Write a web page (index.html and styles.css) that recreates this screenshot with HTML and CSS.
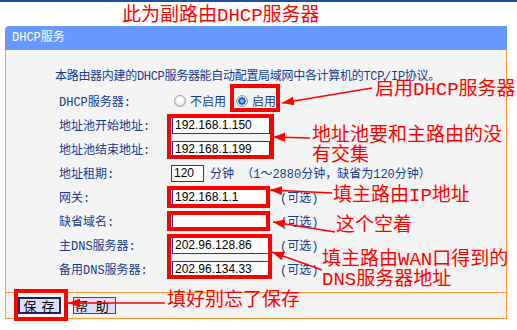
FILE: index.html
```html
<!DOCTYPE html>
<html lang="zh-CN">
<head>
<meta charset="utf-8">
<title>DHCP服务</title>
<link rel="stylesheet" href="styles.css">
</head>
<body>
<div class="topline"></div>
<h1 class="title">此为副路由DHCP服务器</h1>
<div class="panel">
  <div class="panel-head">DHCP服务</div>
  <div class="panel-body">
    <p class="intro">本路由器内建的DHCP服务器能自动配置局域网中各计算机的TCP/IP协议。</p>
    <div class="form">
      <div class="label">DHCP服务器:</div>
      <div class="field">
        <span class="radio"></span><span class="rlabel">不启用</span>
        <span class="radio on"></span><span class="rlabel">启用</span>
      </div>
      <div class="label">地址池开始地址:</div>
      <div class="field"><span class="input">192.168.1.150</span></div>
      <div class="label">地址池结束地址:</div>
      <div class="field"><span class="input">192.168.1.199</span></div>
      <div class="label">地址租期:</div>
      <div class="field"><span class="input short">120</span><span class="unit">分钟 （1～2880分钟，缺省为120分钟）</span></div>
      <div class="label">网关:</div>
      <div class="field"><span class="input">192.168.1.1</span><span class="opt">(可选)</span></div>
      <div class="label">缺省域名:</div>
      <div class="field"><span class="input"></span><span class="opt">(可选)</span></div>
      <div class="label">主DNS服务器:</div>
      <div class="field"><span class="input">202.96.128.86</span><span class="opt">(可选)</span></div>
      <div class="label">备用DNS服务器:</div>
      <div class="field"><span class="input">202.96.134.33</span><span class="opt">(可选)</span></div>
    </div>
  </div>
  <div class="panel-foot">
    <span class="btn btn-save">保 存</span>
    <span class="btn btn-help">帮 助</span>
  </div>
</div>

<div class="notes">
  <svg class="marks" width="517" height="330" viewBox="0 0 517 330">
    <defs>
      <marker id="head" markerUnits="userSpaceOnUse" markerWidth="13" markerHeight="9" refX="12" refY="4.5" orient="auto">
        <path d="M0,0 L12,4.5 L0,9 Z" fill="#ff0000"/>
      </marker>
    </defs>
    <g fill="none" stroke="#ff0000" stroke-width="4">
      <rect x="232" y="86" width="46" height="24"/>
      <rect x="169" y="116" width="103" height="41"/>
      <rect x="169" y="188" width="99" height="18"/>
      <rect x="169" y="213" width="99" height="16"/>
      <rect x="169" y="236" width="101" height="41"/>
      <rect x="16" y="291" width="50" height="28"/>
    </g>
    <g stroke="#ff0000" stroke-width="1.5" marker-end="url(#head)">
      <line x1="372" y1="88" x2="282" y2="103"/>
      <line x1="310" y1="138" x2="273" y2="137"/>
      <line x1="332" y1="193" x2="270" y2="190"/>
      <line x1="335" y1="232" x2="273" y2="222"/>
      <line x1="322" y1="270" x2="272" y2="252"/>
      <line x1="165" y1="303" x2="68" y2="303"/>
    </g>
  </svg>
  <span class="note n1">启用DHCP服务器</span>
  <span class="note n2">地址池要和主路由的没<br>有交集</span>
  <span class="note n3">填主路由IP地址</span>
  <span class="note n4">这个空着</span>
  <span class="note n5">填主路由WAN口得到的<br>DNS服务器地址</span>
  <span class="note n6">填好别忘了保存</span>
</div>
</body>
</html>
```

FILE: styles.css
```css
* { box-sizing: border-box; margin: 0; padding: 0; }

body {
  width: 517px;
  height: 330px;
  background: #ffffff;
  font-family: "Liberation Mono", "Noto Sans CJK SC", monospace;
  font-size: 12px;
  color: #163b8c;
  position: relative;
  overflow: hidden;
}

.topline { height: 2px; background: #1d4f9f; }

.title {
  font-size: 19px;
  font-weight: normal;
  line-height: 28px;
  height: 24px;
  padding-left: 122px;
  color: #ff0000;
}

.panel { margin-left: 5px; width: 502px; }

.panel-head {
  height: 24px;
  line-height: 24px;
  background: #6699ff;
  color: #ffffff;
  padding-left: 7px;
  border-top-left-radius: 4px;
}

.panel-body {
  background: #f4f4f4;
  border-left: 1px solid #ff9933;
  border-right: 1px solid #ff9933;
  padding: 15px 0 11px 49px;
}

.intro {
  height: 24px;
  padding-top: 6px;
  line-height: 12px;
  white-space: nowrap;
  letter-spacing: -0.3px;
}

.form {
  display: grid;
  grid-template-columns: 113px auto;
  grid-auto-rows: 24px;
  align-items: center;
  padding-left: 4px;
}

.label { white-space: nowrap; }

.field { display: flex; align-items: center; white-space: nowrap; }

.input {
  display: block;
  width: 98px;
  height: 17px;
  border: 1px solid #1c3d8f;
  background: #ffffff;
  font-family: "Liberation Sans", sans-serif;
  font-size: 12px;
  line-height: 15px;
  padding-left: 2px;
  color: #000000;
}

.input.short { width: 33px; margin-left: -1px; }

.unit { margin-left: 6px; }

.opt { margin-left: 10px; }

.radio {
  width: 12px;
  height: 12px;
  border-radius: 50%;
  border: 1px solid #a0a0a0;
  background: radial-gradient(circle at 50% 40%, #ffffff 0 30%, #dcdcdc 70%, #b4b4b4 100%);
  margin-left: 2px;
}

.radio.on {
  margin-left: 10px;
  background: radial-gradient(circle, #7cc8ff 0 1.2px, #1a6fd6 2.2px, #0b3f8f 3.4px, #eeeeee 3.9px, #cfcfcf 5px);
}

.rlabel { margin-left: 4px; }

.panel-foot {
  height: 27px;
  border: 1px solid #ff9933;
  background: #f4f4f4;
  display: flex;
  align-items: center;
  gap: 12px;
  padding-left: 12px;
}

.btn {
  width: 43px;
  height: 17px;
  display: flex;
  align-items: center;
  background: #dde0fb;
  color: #000000;
  font-size: 13px;
  white-space: pre;
}

.btn-save {
  border: 2px solid #1b275f;
  justify-content: center;
  font-family: "Noto Sans CJK SC", sans-serif;
  letter-spacing: 1px;
}

.btn-help {
  border: 1px solid #2b4ea3;
  padding-left: 1px;
}

.notes { position: absolute; left: 0; top: 0; width: 517px; height: 330px; pointer-events: none; }
.marks { position: absolute; left: 0; top: 0; }

.note {
  position: absolute;
  color: #ff0000;
  font-size: 19px;
  font-weight: normal;
  line-height: 20px;
  white-space: nowrap;
}

.n1 { left: 375px; top: 83px; line-height: 14px; }
.n2 { left: 312px; top: 126px; }
.n3 { left: 333px; top: 186px; }
.n4 { left: 336px; top: 216px; }
.n5 { left: 322px; top: 250px; }
.n6 { left: 167px; top: 291px; }
```
